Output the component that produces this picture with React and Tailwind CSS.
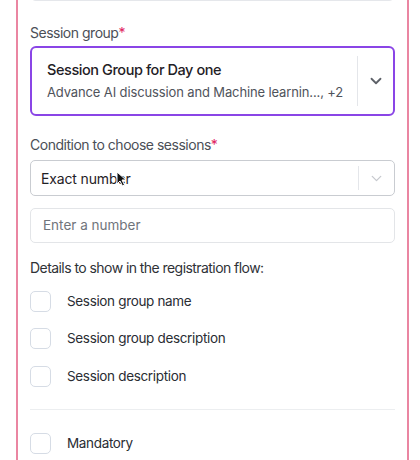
import { ChevronDown } from "lucide-react";

function Label({ children, required }) {
  return (
    <p className="text-[14px] tracking-[-0.035em] text-[#4b4f57] leading-none">
      {children}
      {required && <span className="text-[#e0245e]">*</span>}
    </p>
  );
}

function Check({ label }) {
  return (
    <label className="flex items-center gap-4 h-[20px]">
      <span className="w-[21px] h-[21px] rounded-[5px] border border-[#d6dce5] bg-white" />
      <span className="text-[13.5px] tracking-[-0.025em] text-[#2a2d33]">{label}</span>
    </label>
  );
}

export default function App() {
  return (
    <div className="w-[420px] h-[460px] bg-white overflow-hidden font-['Inter',sans-serif]">
      <div className="ml-[16px] w-[393px] h-[480px] -mt-[20px] border-x-2 border-[#ea86a2] px-[12px]">
        <div className="h-[21px] rounded-b-[6px] border border-t-0 border-[#e5e7eb]" />

        <div className="mt-[25px]">
          <Label required>Session group</Label>
          <div className="mt-[6px] h-[70px] flex items-center rounded-[6px] border-2 border-[#8a45e6] bg-white">
            <div className="flex-1 min-w-0 pl-[15px] pr-[6px]">
              <p className="text-[14.5px] tracking-[-0.03em] text-[#1f2126] font-medium leading-none">Session Group for Day one</p>
              <p className="mt-[9px] text-[13px] tracking-[-0.01em] text-[#4f535b] leading-none whitespace-nowrap">Advance AI discussion and Machine learnin..., +2</p>
            </div>
            <div className="w-px h-[50px] bg-[#e4e6ea]" />
            <div className="w-[35px] flex justify-center">
              <ChevronDown size={18} strokeWidth={2.4} className="text-[#5d6168]" />
            </div>
          </div>
        </div>

        <div className="mt-[22px]">
          <Label required>Condition to choose sessions</Label>
          <div className="relative mt-[8px] h-[36px] flex items-center rounded-[5px] border border-[#c9ccd1] bg-white">
            <span className="flex-1 pl-[10px] text-[14px] tracking-[-0.01em] text-[#1f2126]">Exact number</span>
            <div className="w-px h-[24px] bg-[#e4e6ea]" />
            <div className="w-[35px] flex justify-center">
              <ChevronDown size={17} strokeWidth={1.8} className="text-[#c6c9ce]" />
            </div>
            <svg className="absolute left-[85px] top-[10px]" width="11" height="16" viewBox="0 0 11 16">
              <path d="M1 1 L1 13 L4 10 L6.5 15 L8.5 14 L6 9 L10 9 Z" fill="#111" stroke="#fff" strokeWidth="1" />
            </svg>
          </div>
          <div className="mt-[12px] h-[35px] flex items-center rounded-[5px] border border-[#e3e5e8] bg-white pl-[12px] text-[13.5px] text-[#70747b]">
            Enter a number
          </div>
        </div>

        <div className="mt-[18px]">
          <p className="text-[14px] tracking-[-0.04em] text-[#2f3237] leading-none">Details to show in the registration flow:</p>
          <div className="mt-[16px] flex flex-col gap-[17.5px]">
            <Check label="Session group name" />
            <Check label="Session group description" />
            <Check label="Session description" />
          </div>
        </div>

        <div className="mt-[23px] h-px bg-[#eceef0]" />

        <div className="mt-[23px]">
          <Check label="Mandatory" />
        </div>
      </div>
    </div>
  );
}
